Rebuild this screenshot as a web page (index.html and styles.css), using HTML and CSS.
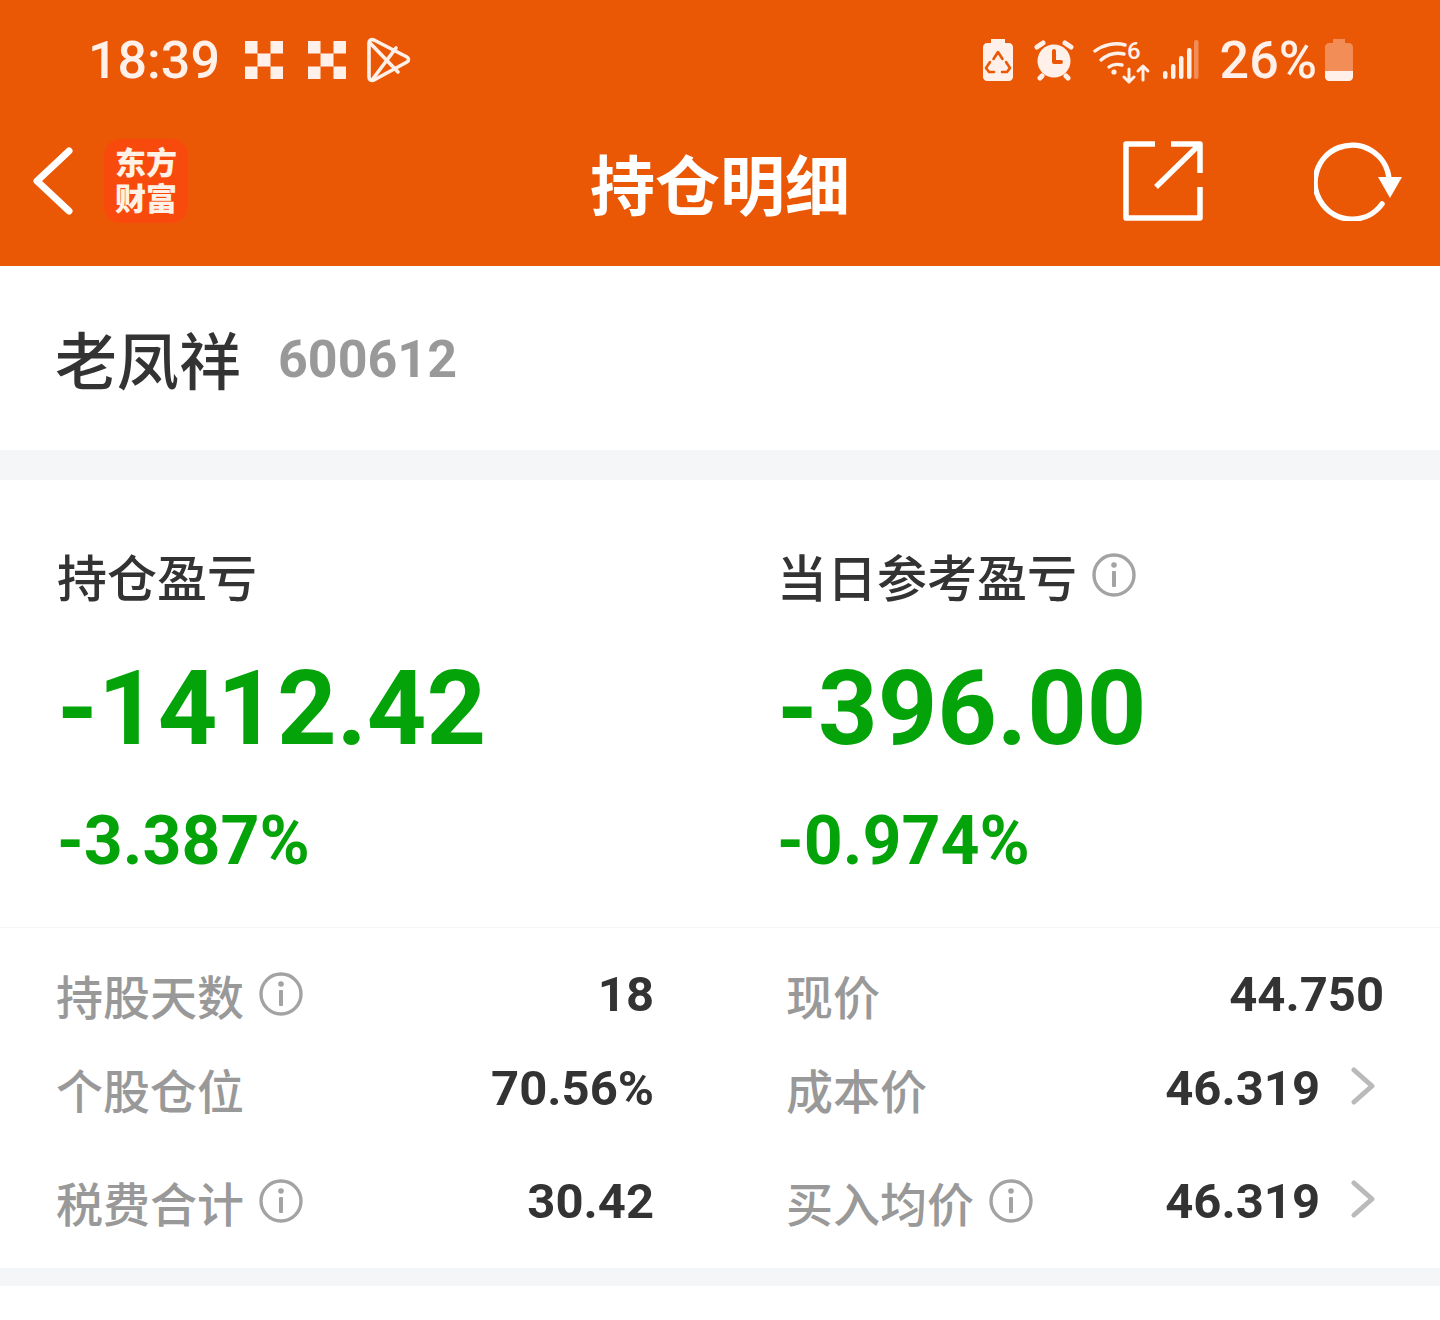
FILE: index.html
```html
<!DOCTYPE html>
<html lang="zh-CN">
<head>
    <meta charset="UTF-8">
    <meta name="viewport" content="width=device-width, initial-scale=1.0">
    <title>持仓明细</title>
    <link rel="stylesheet" href="styles.css">
</head>
<body>
    <header class="top">
        <div class="status">
            <div class="status-left">
                <span class="time">18:39</span>
                <svg class="ic-check" viewBox="0 0 38 38"><path fill="#fff1ea" d="M0 0h12.5v12.5H0zM25.5 0H38v12.5H25.5zM12.5 12.5h13v13h-13zM0 25.5h12.5V38H0zM25.5 25.5H38V38H25.5z"/></svg>
                <svg class="ic-check" viewBox="0 0 38 38"><path fill="#fff1ea" d="M0 0h12.5v12.5H0zM25.5 0H38v12.5H25.5zM12.5 12.5h13v13h-13zM0 25.5h12.5V38H0zM25.5 25.5H38V38H25.5z"/></svg>
                <svg class="ic-play" viewBox="0 0 46 48" fill="none" stroke="#fff1ea" stroke-width="3.6" stroke-linejoin="round" stroke-linecap="round"><path d="M3 7c0-3 2-4 5-3l33 17c2 1 2 4 0 5L8 44c-3 1-5 0-5-3z"/><path d="M4 7l28 29M6 44L30 12"/></svg>
            </div>
            <div class="status-right">
                <svg class="ic-bat-save" viewBox="0 0 30 42"><path fill="#fff1ea" d="M8 0h14v4h4c2 0 4 2 4 4v30c0 2-2 4-4 4H4c-2 0-4-2-4-4V8c0-2 2-4 4-4h4z"/><path fill="none" stroke="#eb5805" stroke-width="2.6" stroke-linecap="round" stroke-linejoin="round" d="M10.500 20l4.500-7 4.500 7M23 23l4 6-3 4h-5M7 23l-4 6 3 4h5"/></svg>
                <svg class="ic-alarm" viewBox="0 0 40 42"><circle cx="20" cy="22" r="16.5" fill="#fff1ea"/><path stroke="#fff1ea" stroke-width="5" stroke-linecap="round" d="M3 8l6-4M37 8l-6-4M8 37l-2 2M32 37l2 2"/><path fill="none" stroke="#eb5805" stroke-width="4" stroke-linecap="round" stroke-linejoin="round" d="M20 12v11h7"/></svg>
                <svg class="ic-wifi" viewBox="0 -6 58 48"><g fill="none" stroke="#fff1ea" stroke-width="3.4" stroke-linecap="round"><path d="M2 9C10 3 22 0 32 3"/><path d="M8 18c7-6 15-8 23-6"/><path d="M16 25c4-3 9-3 13-2"/></g><g fill="none" stroke="#fff1ea" stroke-width="3" stroke-linecap="round" stroke-linejoin="round"><path d="M36 27v13M31 35l5 5 5-5"/><path d="M50 38V24M45 29l5-5 5 5"/></g><circle cx="21" cy="30" r="2.6" fill="#fff1ea"/><text class="wifi-six" x="34" y="17">6</text></svg>
                <svg class="ic-signal" viewBox="0 0 36 42"><g fill="#fff1ea"><rect x="0" y="32" width="4.5" height="8" rx="2.2"/><rect x="8" y="25" width="4.5" height="15" rx="2.2"/><rect x="16" y="17" width="4.5" height="23" rx="2.2"/><rect x="24" y="9" width="4.5" height="31" rx="2.2"/></g><rect x="31" y="1" width="4.5" height="39" rx="2.2" fill="#f38d57"/></svg>
                <span class="batt-pct">26%</span>
                <svg class="ic-batt" viewBox="0 0 28 42"><path fill="#f38d57" d="M8 0h12v4h4c2 0 4 2 4 4v24H0V8c0-2 2-4 4-4h4z"/><path fill="#fff1ea" d="M0 32h28v6c0 2-2 4-4 4H4c-2 0-4-2-4-4z"/></svg>
            </div>
        </div>
        <nav class="navbar">
            <div class="nav-left">
                <svg class="ic-back" viewBox="0 0 42 68" fill="none" stroke="#fff" stroke-width="7" stroke-linecap="round" stroke-linejoin="round"><path d="M37 4L5 34l32 30"/></svg>
                <div class="brand">东方财富</div>
            </div>
            <h1 class="nav-title">持仓明细</h1>
            <div class="nav-right">
                <svg class="ic-share" viewBox="0 0 80 80" fill="none" stroke="#fff" stroke-width="5.5" stroke-linejoin="round"><path d="M32 3H3v74h74V46"/><path d="M48 3h29v29M77 3L33 46"/></svg>
                <svg class="ic-refresh" viewBox="0 0 90 80"><path fill="none" stroke="#fff" stroke-width="5.5" stroke-linecap="round" d="M68 63A37 37 0 1 1 75 38"/><path fill="#fff" d="M64 36h24L76 57z"/></svg>
            </div>
        </nav>
    </header>

    <section class="stock">
        <span class="stock-name">老凤祥</span>
        <span class="stock-code">600612</span>
    </section>

    <section class="card">
        <div class="profit">
            <div class="profit-col">
                <div class="profit-label">持仓盈亏</div>
                <div class="profit-value">-1412.42</div>
                <div class="profit-rate">-3.387%</div>
            </div>
            <div class="profit-col">
                <div class="profit-label">当日参考盈亏
                    <svg class="ic-info" viewBox="0 0 44 44"><circle cx="22" cy="22" r="20" fill="none" stroke="#a3a3a3" stroke-width="3.4"/><circle cx="22" cy="12" r="2.8" fill="#a3a3a3"/><rect x="20" y="18" width="4" height="16" rx="1" fill="#a3a3a3"/></svg>
                </div>
                <div class="profit-value">-396.00</div>
                <div class="profit-rate">-0.974%</div>
            </div>
        </div>
        <div class="details">
            <div class="row">
                <div class="cell">
                    <span class="key">持股天数
                        <svg class="ic-info" viewBox="0 0 44 44"><circle cx="22" cy="22" r="20" fill="none" stroke="#a3a3a3" stroke-width="3.4"/><circle cx="22" cy="12" r="2.8" fill="#a3a3a3"/><rect x="20" y="18" width="4" height="16" rx="1" fill="#a3a3a3"/></svg>
                    </span>
                    <span class="val">18</span>
                </div>
                <div class="cell">
                    <span class="key">现价</span>
                    <span class="val">44.750</span>
                </div>
            </div>
            <div class="row">
                <div class="cell">
                    <span class="key">个股仓位</span>
                    <span class="val">70.56%</span>
                </div>
                <div class="cell">
                    <span class="key">成本价</span>
                    <span class="val">46.319<svg class="ic-more" viewBox="0 0 24 38" fill="none" stroke="#bababa" stroke-width="5" stroke-linecap="round" stroke-linejoin="round"><path d="M3 3l18 16L3 35"/></svg></span>
                </div>
            </div>
            <div class="row row-c">
                <div class="cell">
                    <span class="key">税费合计
                        <svg class="ic-info" viewBox="0 0 44 44"><circle cx="22" cy="22" r="20" fill="none" stroke="#a3a3a3" stroke-width="3.4"/><circle cx="22" cy="12" r="2.8" fill="#a3a3a3"/><rect x="20" y="18" width="4" height="16" rx="1" fill="#a3a3a3"/></svg>
                    </span>
                    <span class="val">30.42</span>
                </div>
                <div class="cell">
                    <span class="key">买入均价
                        <svg class="ic-info" viewBox="0 0 44 44"><circle cx="22" cy="22" r="20" fill="none" stroke="#a3a3a3" stroke-width="3.4"/><circle cx="22" cy="12" r="2.8" fill="#a3a3a3"/><rect x="20" y="18" width="4" height="16" rx="1" fill="#a3a3a3"/></svg>
                    </span>
                    <span class="val">46.319<svg class="ic-more" viewBox="0 0 24 38" fill="none" stroke="#bababa" stroke-width="5" stroke-linecap="round" stroke-linejoin="round"><path d="M3 3l18 16L3 35"/></svg></span>
                </div>
            </div>
        </div>
    </section>
    <div class="bottom"></div>
</body>
</html>
```

FILE: styles.css
```css
* {
    box-sizing: border-box;
}
body {
    margin: 0;
    background-color: #ffffff;
    color: #333333;
    font-family: Roboto, "Noto Sans CJK SC", sans-serif;
}
svg {
    display: block;
    flex: none;
}

/* top bar */
.top {
    height: 266px;
    background-color: #eb5805;
    color: #ffffff;
}
.status {
    height: 120px;
    padding: 0 87px 0 88px;
    display: flex;
    align-items: center;
    justify-content: space-between;
}
.status-left, .status-right {
    display: flex;
    align-items: center;
}
.time {
    font-size: 52px;
    font-weight: 500;
    color: #fff1ea;
    margin-right: 25px;
}
.ic-check {
    width: 38px;
    height: 38px;
    margin-right: 25px;
}
.ic-play {
    width: 46px;
    height: 48px;
    margin-left: -5px;
}
.ic-bat-save {
    width: 30px;
    height: 42px;
    margin-right: 21px;
}
.ic-alarm {
    width: 40px;
    height: 42px;
    margin-right: 19px;
}
.ic-wifi {
    width: 58px;
    height: 48px;
    margin-right: 12px;
}
.wifi-six {
    font-size: 24px;
    font-weight: 500;
    fill: #fff1ea;
}
.ic-signal {
    width: 36px;
    height: 42px;
    margin-right: 21px;
}
.batt-pct {
    font-size: 52px;
    font-weight: 500;
    color: #fff1ea;
    margin-right: 8px;
}
.ic-batt {
    width: 28px;
    height: 42px;
}

/* nav */
.navbar {
    height: 146px;
    position: relative;
    display: flex;
    align-items: center;
    justify-content: space-between;
    padding: 0 36px 24px 32px;
}
.nav-left, .nav-right {
    display: flex;
    align-items: center;
}
.ic-back {
    width: 42px;
    height: 68px;
}
.brand {
    width: 84px;
    height: 84px;
    margin-left: 30px;
    padding: 4px 10px 0;
    border-radius: 16px;
    background-color: #f94a0d;
    text-align: center;
    font-size: 31px;
    line-height: 36px;
    font-weight: 900;
    font-family: "Noto Sans CJK SC", sans-serif;
    color: #fff1e6;
}
.nav-title {
    margin: 0;
    font-size: 65px;
    font-weight: 700;
    line-height: 80px;
    font-family: "Noto Sans CJK SC", sans-serif;
    position: absolute;
    left: 0;
    right: 0;
    top: 22px;
    text-align: center;
}
.ic-share {
    width: 80px;
    height: 80px;
}
.ic-refresh {
    width: 90px;
    height: 80px;
    margin-left: 111px;
}

/* stock name */
.stock {
    height: 184px;
    padding: 0 55px;
    display: flex;
    align-items: center;
}
.stock-name {
    font-size: 62px;
    font-weight: 500;
    font-family: "Noto Sans CJK SC", sans-serif;
}
.stock-code {
    font-size: 52px;
    font-weight: 700;
    color: #999999;
    margin-left: 37px;
    padding-top: 2px;
}

.card {
    border-top: 30px solid #f5f6f8;
    border-bottom: 18px solid #f5f6f8;
}
.profit {
    height: 448px;
    padding: 63px 0 0 57px;
    display: flex;
    border-bottom: 1px solid #f5f5f5;
}
.profit-col {
    flex: none;
    width: 720px;
}
.profit-col + .profit-col {
    width: 600px;
}
.profit-label {
    display: flex;
    align-items: center;
    gap: 15px;
    height: 64px;
    font-size: 50px;
    font-weight: 500;
    font-family: "Noto Sans CJK SC", sans-serif;
}
.profit-value {
    margin-top: 42px;
    font-size: 104px;
    line-height: 120px;
    font-weight: 700;
    color: #04a30a;
}
.profit-rate {
    margin-top: 32px;
    font-size: 68px;
    line-height: 80px;
    font-weight: 700;
    color: #04a30a;
}

.details {
    height: 340px;
    padding: 19px 56px 0;
}
.row {
    display: flex;
    justify-content: space-between;
    height: 94px;
    align-items: center;
}
.row-c {
    margin-top: 19px;
}
.cell {
    width: 598px;
    display: flex;
    align-items: center;
    justify-content: space-between;
}
.key {
    display: flex;
    align-items: center;
    gap: 15px;
    font-size: 47px;
    font-weight: 500;
    color: #999999;
    font-family: "Noto Sans CJK SC", sans-serif;
}
.val {
    display: flex;
    align-items: center;
    font-size: 49px;
    font-weight: 700;
}
.ic-info {
    width: 44px;
    height: 44px;
}
.ic-more {
    width: 24px;
    height: 38px;
    margin: -4px 9px 0 31px;
}
.bottom {
    height: 34px;
}
```
